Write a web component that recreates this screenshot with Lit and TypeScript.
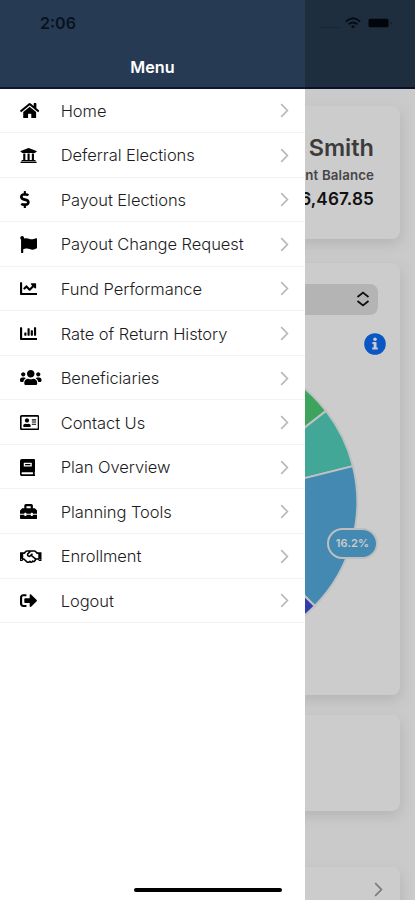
import { LitElement, html, svg, css } from "lit";
import { customElement, property } from "lit/decorators.js";

interface Icon {
  w: number;
  d: string;
}

const axes =
  "M496 384H64V80c0-8.84-7.16-16-16-16H16C7.16 64 0 71.16 0 80v336c0 17.67 14.33 32 32 32h464c8.84 0 16-7.16 16-16v-32c0-8.84-7.16-16-16-16z";

const icons: Record<string, Icon> = {
  home: { w: 576, d: "M280.37 148.26L96 300.11V464a16 16 0 0 0 16 16l112.06-.29a16 16 0 0 0 15.92-16V368a16 16 0 0 1 16-16h64a16 16 0 0 1 16 16v95.64a16 16 0 0 0 16 16.05L464 480a16 16 0 0 0 16-16V300L295.67 148.26a12.19 12.19 0 0 0-15.3 0zM571.6 251.47L488 182.56V44.05a12 12 0 0 0-12-12h-56a12 12 0 0 0-12 12v72.61L318.47 43a48 48 0 0 0-61 0L4.34 251.47a12 12 0 0 0-1.6 16.9l25.5 31A12 12 0 0 0 45.15 301l235.22-193.74a12.19 12.19 0 0 1 15.3 0L530.9 301a12 12 0 0 0 16.9-1.6l25.5-31a12 12 0 0 0-1.7-16.93z" },
  bank: { w: 512, d: "M496 128v16a8 8 0 0 1-8 8h-24v12c0 6.627-5.373 12-12 12H60c-6.627 0-12-5.373-12-12v-12H24a8 8 0 0 1-8-8v-16a8 8 0 0 1 4.941-7.392l232-88a7.996 7.996 0 0 1 6.118 0l232 88A8 8 0 0 1 496 128zm-24 304H40c-13.255 0-24 10.745-24 24v16a8 8 0 0 0 8 8h464a8 8 0 0 0 8-8v-16c0-13.255-10.745-24-24-24zM96 192v192H60c-6.627 0-12 5.373-12 12v20h416v-20c0-6.627-5.373-12-12-12h-36V192h-64v192h-64V192h-64v192h-64V192H96z" },
  dollar: { w: 288, d: "M209.2 233.4l-108-31.6C88.7 198.2 80 186.5 80 173.5c0-16.3 13.2-29.5 29.5-29.5h66.3c12.2 0 24.2 3.7 34.2 10.5 6.1 4.1 14.3 3.1 19.5-2l34.8-34c7.1-6.9 6.1-18.4-1.8-24.5C238 74.8 207.4 64.1 176 64V16c0-8.8-7.2-16-16-16h-32c-8.8 0-16 7.2-16 16v48h-2.5C45.8 64-5.4 118.7.5 183.6c4.2 46.1 39.4 83.6 83.8 96.6l102.5 30c12.5 3.7 21.2 15.3 21.2 28.3 0 16.3-13.2 29.5-29.5 29.5h-66.3C100 368 88 364.3 78 357.5c-6.1-4.1-14.3-3.1-19.5 2l-34.8 34c-7.1 6.9-6.1 18.4 1.8 24.5 24.5 19.2 55.1 29.9 86.5 30v48c0 8.8 7.2 16 16 16h32c8.8 0 16-7.2 16-16v-48.2c46.6-.9 90.3-28.6 105.7-72.7 21.5-61.6-14.6-124.8-72.5-141.7z" },
  flag: { w: 512, d: "M349.565 98.783C295.978 98.783 251.721 64 184.348 64c-24.955 0-47.309 4.384-68.045 12.013a55.947 55.947 0 0 0 3.586-23.562C118.117 24.015 94.806 1.206 66.338.048 34.345-1.254 8 24.296 8 56c0 19.026 9.497 35.825 24 45.945V488c0 13.255 10.745 24 24 24h16c13.255 0 24-10.745 24-24v-94.4c28.311-12.064 63.582-22.122 114.435-22.122 53.588 0 97.844 34.783 165.217 34.783 48.169 0 86.667-16.294 122.505-40.858C506.84 359.452 512 349.571 512 339.045v-243.1c0-23.393-24.269-38.87-45.485-29.016-34.338 15.948-76.454 31.854-116.95 31.854z" },
  line: { w: 512, d: axes + "M464 96H345.94c-21.38 0-32.09 25.85-16.97 40.97l32.4 32.4L288 242.75l-73.37-73.37c-12.5-12.5-32.76-12.5-45.25 0l-68.69 68.69c-6.25 6.25-6.25 16.38 0 22.63l22.62 22.62c6.25 6.25 16.38 6.25 22.63 0L192 237.25l73.37 73.37c12.5 12.5 32.76 12.5 45.25 0l96-96 32.4 32.4c15.12 15.12 40.97 4.41 40.97-16.97V112c.01-8.84-7.15-16-15.99-16z" },
  bars: { w: 512, d: "M332.8 320h38.4c6.4 0 12.8-6.4 12.8-12.8V172.8c0-6.4-6.4-12.8-12.8-12.8h-38.4c-6.4 0-12.8 6.4-12.8 12.8v134.4c0 6.4 6.4 12.8 12.8 12.8zm96 0h38.4c6.4 0 12.8-6.4 12.8-12.8V76.8c0-6.4-6.4-12.8-12.8-12.8h-38.4c-6.4 0-12.8 6.4-12.8 12.8v230.4c0 6.4 6.4 12.8 12.8 12.8zm-288 0h38.4c6.4 0 12.8-6.4 12.8-12.8v-70.4c0-6.4-6.4-12.8-12.8-12.8h-38.4c-6.4 0-12.8 6.4-12.8 12.8v70.4c0 6.4 6.4 12.8 12.8 12.8zm96 0h38.4c6.4 0 12.8-6.4 12.8-12.8V108.8c0-6.4-6.4-12.8-12.8-12.8h-38.4c-6.4 0-12.8 6.4-12.8 12.8v198.4c0 6.4 6.4 12.8 12.8 12.8z" + axes },
  users: { w: 640, d: "M96 224c35.3 0 64-28.7 64-64s-28.7-64-64-64-64 28.7-64 64 28.7 64 64 64zm448 0c35.3 0 64-28.7 64-64s-28.7-64-64-64-64 28.7-64 64 28.7 64 64 64zm32 32h-64c-17.6 0-33.5 7.1-45.1 18.6 40.3 22.1 68.9 62 75.1 109.4h66c17.7 0 32-14.3 32-32v-32c0-35.3-28.7-64-64-64zm-256 0c61.9 0 112-50.1 112-112S381.9 32 320 32 208 82.1 208 144s50.1 112 112 112zm76.8 32h-8.3c-20.8 10-43.9 16-68.5 16s-47.6-6-68.5-16h-8.3C179.6 288 128 339.6 128 403.2V432c0 26.5 21.5 48 48 48h288c26.5 0 48-21.5 48-48v-28.8c0-63.6-51.6-115.2-115.2-115.2zm-223.7-13.4C161.5 263.1 145.6 256 128 256H64c-35.3 0-64 28.7-64 64v32c0 17.7 14.3 32 32 32h65.9c6.3-47.4 34.9-87.3 75.2-109.4z" },
  card: { w: 576, d: "M528 32H48C21.5 32 0 53.5 0 80v352c0 26.5 21.5 48 48 48h480c26.5 0 48-21.5 48-48V80c0-26.5-21.5-48-48-48zm0 400H48V80h480v352zM208 256c35.3 0 64-28.7 64-64s-28.7-64-64-64-64 28.7-64 64 28.7 64 64 64zm-89.6 128h179.2c12.4 0 22.4-8.6 22.4-19.2v-19.2c0-31.8-30.1-57.6-67.2-57.6-10.8 0-18.7 8-44.8 8-26.9 0-33.4-8-44.8-8-37.1 0-67.2 25.8-67.2 57.6v19.2c0 10.6 10 19.2 22.4 19.2zM360 320h112c4.4 0 8-3.6 8-8v-16c0-4.4-3.6-8-8-8H360c-4.4 0-8 3.6-8 8v16c0 4.4 3.6 8 8 8zm0-64h112c4.4 0 8-3.6 8-8v-16c0-4.4-3.6-8-8-8H360c-4.4 0-8 3.6-8 8v16c0 4.4 3.6 8 8 8zm0-64h112c4.4 0 8-3.6 8-8v-16c0-4.4-3.6-8-8-8H360c-4.4 0-8 3.6-8 8v16c0 4.4 3.6 8 8 8z" },
  book: { w: 448, d: "M448 358V28c0-15.500-12.500-28-28-28H56C25 0 0 25 0 56v390c0 36 30 66 66 66h358c13.300 0 24-10.700 24-24v-14c0-8-3-14-9-19v-72c6-5 9-12 9-25zM112 122c0-6 4-10 10-10h218c6 0 10 4 10 10v92c0 6-4 10-10 10H122c-6 0-10-4-10-10v-92zM152 150v36h158v-36zM385 456H76c-18 0-32-13-32-30s14-30 32-30h309z" },
  toolbox: { w: 512, d: "M502.63 214.63l-45.25-45.25c-6-6-14.14-9.37-22.63-9.37H384V80c0-26.51-21.49-48-48-48H176c-26.51 0-48 21.49-48 48v80H77.25c-8.49 0-16.62 3.37-22.63 9.37L9.37 214.63c-6 6-9.37 14.14-9.37 22.63V320h128v-16c0-8.84 7.16-16 16-16h32c8.84 0 16 7.16 16 16v16h128v-16c0-8.84 7.16-16 16-16h32c8.84 0 16 7.16 16 16v16h128v-82.75c0-8.48-3.37-16.62-9.37-22.62zM320 160H192V96h128v64zm64 208c0 8.84-7.16 16-16 16h-32c-8.84 0-16-7.16-16-16v-16H192v16c0 8.84-7.16 16-16 16h-32c-8.84 0-16-7.16-16-16v-16H0v96c0 17.67 14.33 32 32 32h448c17.67 0 32-14.33 32-32v-96H384v16z" },
  handshake: { w: 640, d: "M519.2 127.9l-47.6-47.6A56.252 56.252 0 0 0 432 64H205.2c-14.8 0-29.1 5.9-39.6 16.3L118 127.9H0v255.7h64c17.6 0 31.8-14.2 31.9-31.7h9.1l84.6 76.4c30.9 25.1 73.8 25.7 105.6 3.8 12.5 10.8 26 15.9 41.1 15.9 18.2 0 35.3-7.4 48.8-24 22.1 8.7 48.2 2.6 64-16.8l26.2-32.3c5.6-6.9 9.1-14.8 10.9-23h57.9c.1 17.5 14.4 31.7 31.9 31.7h64V127.9H519.2zM48 351.6c-8.8 0-16-7.2-16-16s7.2-16 16-16 16 7.2 16 16c0 8.9-7.2 16-16 16zm390-6.9l-26.1 32.2c-2.8 3.4-7.8 4-11.3 1.2l-23.9-19.4-30 36.5c-6 7.3-15 4.8-18 2.4l-36.8-31.5-15.6 19.2c-13.9 17.1-39.2 19.7-55.3 6.6l-97.3-88H96V175.8h41.9l61.7-61.6c2-.8 3.7-1.5 5.7-2.3H262l-38.7 35.5c-29.4 26.9-31.1 72.3-4.4 101.3 14.8 16.2 61.2 41.2 101.5 4.4l8.2-7.5 108.2 87.8c3.4 2.8 3.9 7.9 1.2 11.3zm106-40.8h-69.2c-2.3-2.8-4.9-5.4-7.7-7.7l-102.7-83.4 12.5-11.4c6.5-6 7-16.1 1-22.6L367 167.1c-6-6.5-16.1-6.9-22.6-1l-55.2 50.6c-9.5 8.7-25.7 9.4-34.6 0-9.3-9.9-8.5-25.1 1.2-33.9l65.6-60.2c7.4-6.8 17-10.5 27-10.5l83.7-.2c2.1 0 4.1.8 5.5 2.3l61.7 61.6H544v128.1zm48 47.7c-8.8 0-16-7.2-16-16s7.2-16 16-16 16 7.2 16 16c0 8.9-7.2 16-16 16z" },
  logout: { w: 512, d: "M497 273L329 441c-15 15-41 4.5-41-17v-96H152c-13.3 0-24-10.7-24-24v-96c0-13.3 10.7-24 24-24h136V88c0-21.4 25.9-32 41-17l168 168c9.3 9.4 9.3 24.6 0 34zM192 436v-40c0-6.6-5.4-12-12-12H96c-17.7 0-32-14.3-32-32V160c0-17.7 14.3-32 32-32h84c6.6 0 12-5.4 12-12V76c0-6.600-5.400-12-12-12H96c-53 0-96 43-96 96v192c0 53 43 96 96 96h84c6.6 0 12-5.4 12-12z" },
};

const items: [string, string][] = [
  ["home", "Home"],
  ["bank", "Deferral Elections"],
  ["dollar", "Payout Elections"],
  ["flag", "Payout Change Request"],
  ["line", "Fund Performance"],
  ["bars", "Rate of Return History"],
  ["users", "Beneficiaries"],
  ["card", "Contact Us"],
  ["book", "Plan Overview"],
  ["toolbox", "Planning Tools"],
  ["handshake", "Enrollment"],
  ["logout", "Logout"],
];

const chevron = html`<svg width="9" height="15" viewBox="0 0 9 15" fill="none">
  <path d="M1.2 1.2L7.4 7.5L1.2 13.8" stroke="currentColor" stroke-width="1.7" />
</svg>`;

@customElement("menu-row")
class MenuRow extends LitElement {
  @property() icon = "home";
  @property() label = "";

  static styles = css`
    :host {
      display: flex;
      align-items: center;
      box-sizing: border-box;
      height: 44.56px;
      padding: 1px 16px 0 20px;
      border-bottom: 1px solid #f3f3f4;
      color: #1c1c1e;
    }
    .icon {
      display: flex;
      width: 40.7px;
      color: #000;
    }
    .label {
      flex: 1;
      font-size: 16.5px;
      font-weight: 300;
      letter-spacing: -0.06px;
      white-space: nowrap;
    }
    .go {
      display: flex;
      color: #b9b9bc;
    }
  `;

  render() {
    const i = icons[this.icon];
    return html`
      <span class="icon">
        <svg width=${(i.w / 512) * 17.2} height="17.2" viewBox="0 0 ${i.w} 512" fill="currentColor" fill-rule=${this.icon === "book" ? "evenodd" : "nonzero"}>
          <path d=${i.d} />
        </svg>
      </span>
      <span class="label">${this.label}</span>
      <span class="go">${chevron}</span>
    `;
  }
}

const R = 148.3;
const slices = [
  { from: -70, to: -37.9, color: "#4bce74" },
  { from: -37.9, to: -14, color: "#53d1bd" },
  { from: -14, to: 44.5, color: "#54acdf" },
  { from: 44.5, to: 80, color: "#3f4dd8" },
];

function wedge(from: number, to: number) {
  const at = (deg: number) => {
    const a = (deg * Math.PI) / 180;
    return `${150 + R * Math.cos(a)} ${150 + R * Math.sin(a)}`;
  };
  return `M150 150L${at(from)}A${R} ${R} 0 0 1 ${at(to)}Z`;
}

@customElement("app-root")
class AppRoot extends LitElement {
  static styles = css`
    :host {
      display: block;
      position: relative;
      width: 415px;
      height: 900px;
      overflow: hidden;
      background: #fdfdfd;
      font-family: Inter, "Liberation Sans", sans-serif;
      color: #000;
    }
    svg {
      display: block;
      flex: none;
    }
    .bar {
      box-sizing: border-box;
      height: 88.5px;
      background: #273a4e;
      border-bottom: 2px solid #0b1635;
    }
    .page {
      display: flex;
      flex-direction: column;
      padding: 17px 15px 0;
      gap: 24px;
    }
    .card {
      box-sizing: border-box;
      flex: none;
      border-radius: 8px;
      background: #fff;
      box-shadow: 1px 5px 14px rgba(0, 0, 0, 0.11);
    }
    .summary {
      height: 133px;
      padding: 26px 26px 0;
      text-align: right;
    }
    .name {
      font-size: 23.5px;
      line-height: 31px;
      font-weight: 600;
      color: #4b4b4d;
    }
    .caption {
      margin-top: 3px;
      font-size: 13.3px;
      line-height: 18px;
      font-weight: 600;
      letter-spacing: 0.12px;
      color: #58585a;
    }
    .amount {
      margin-top: 3px;
      font-size: 17.2px;
      line-height: 24px;
      font-weight: 600;
      letter-spacing: 0.1px;
      color: #161618;
    }
    .allocation {
      height: 432px;
      padding: 21px 22px 0;
    }
    .select {
      display: flex;
      align-items: center;
      justify-content: flex-end;
      height: 31px;
      padding-right: 8px;
      border-radius: 8px;
      background: #e2e2e3;
    }
    .info {
      display: flex;
      justify-content: flex-end;
      margin: 18px -8px 0 0;
    }
    .chart {
      position: relative;
      width: 300px;
      margin: -3px 0 0 22px;
    }
    .tag {
      position: absolute;
      left: 268px;
      top: 176px;
      box-sizing: border-box;
      width: 51px;
      height: 31px;
      border: 2px solid #eee;
      border-radius: 16px;
      background: #54acdf;
      color: #fff;
      font-size: 11px;
      font-weight: 600;
      line-height: 27px;
      letter-spacing: 0.15px;
      text-align: center;
    }
    .note {
      height: 96px;
      margin-top: -4px;
    }
    .link {
      display: flex;
      align-items: center;
      justify-content: flex-end;
      height: 45px;
      margin-top: 32px;
      padding-right: 17px;
      color: #999;
    }
    .backdrop {
      position: absolute;
      inset: 0;
      background: rgba(0, 0, 0, 0.2);
    }
    .drawer {
      position: absolute;
      inset: 0 auto 0 0;
      width: 305px;
      background: #fff;
    }
    .drawer .bar {
      padding-top: 55px;
      background: #273a53;
      text-align: center;
    }
    .title {
      font-size: 16.2px;
      line-height: 24px;
      font-weight: 600;
      color: #fff;
    }
    .status {
      position: absolute;
      inset: 13px 22px auto 40px;
      display: flex;
      align-items: center;
      height: 20px;
    }
    .time {
      flex: 1;
      font-size: 16px;
      font-weight: 600;
      color: #08131f;
    }
    .cell {
      width: 19px;
      height: 1px;
      margin: 8px 6px 0 0;
      background: #17232f;
    }
    .wifi {
      margin-right: 7.5px;
    }
    .handle {
      position: absolute;
      left: 134px;
      bottom: 8px;
      width: 148px;
      height: 4.5px;
      border-radius: 3px;
      background: #000;
    }
  `;

  render() {
    return html`
      <div class="bar"></div>
      <main class="page">
        <section class="card summary">
          <div class="name">Smith</div>
          <div class="caption">Current Balance</div>
          <div class="amount">$6,467.85</div>
        </section>
        <section class="card allocation">
          <div class="select">
            <svg width="14" height="16" viewBox="0 0 14 16" fill="none" stroke="#111" stroke-width="1.8">
              <path d="M1.5 6L7 1.6L12.5 6M1.5 10L7 14.4L12.5 10" />
            </svg>
          </div>
          <div class="info">
            <svg width="22" height="22" viewBox="0 0 22 22">
              <circle cx="11" cy="11" r="10.8" fill="#0d6cf5" />
              <path d="M8.4 9.1h4.1v5.5h1.3v2H8.2v-2h1.4v-3.5H8.4z" fill="#fff" />
              <circle cx="11" cy="6.2" r="1.75" fill="#fff" />
            </svg>
          </div>
          <div class="chart">
            <svg width="300" height="300" viewBox="0 0 300 300">
              ${slices.map(
                (s) => svg`<path d=${wedge(s.from, s.to)} fill=${s.color} stroke="#eef2f2" stroke-width="2" />`
              )}
            </svg>
            <div class="tag">16.2%</div>
          </div>
        </section>
        <section class="card note"></section>
        <section class="card link">${chevron}</section>
      </main>
      <div class="backdrop"></div>
      <aside class="drawer">
        <header class="bar"><div class="title">Menu</div></header>
        <nav>
          ${items.map(([icon, label]) => html`<menu-row icon=${icon} label=${label}></menu-row>`)}
        </nav>
      </aside>
      <div class="status">
        <span class="time">2:06</span>
        <span class="cell"></span>
        <svg class="wifi" width="16" height="12" viewBox="0 0 16 12" fill="none" stroke="#050b12" stroke-width="1.9">
          <path d="M0.800 4.600Q8 -1.900 15.200 4.600M3.500 7.400Q8 3.400 12.500 7.400" />
          <path d="M8 11.600L5.900 9.400Q8 7.700 10.100 9.400Z" fill="#050b12" stroke="none" />
        </svg>
        <svg width="25" height="10" viewBox="0 0 25 10">
          <rect x="0.5" y="0.8" width="20" height="8.4" rx="1.5" fill="#02060a" />
          <path d="M22.3 3.4v3.2q1.4-.5 1.4-1.6t-1.4-1.6z" fill="#0f1a26" />
        </svg>
      </div>
      <div class="handle"></div>
    `;
  }
}
